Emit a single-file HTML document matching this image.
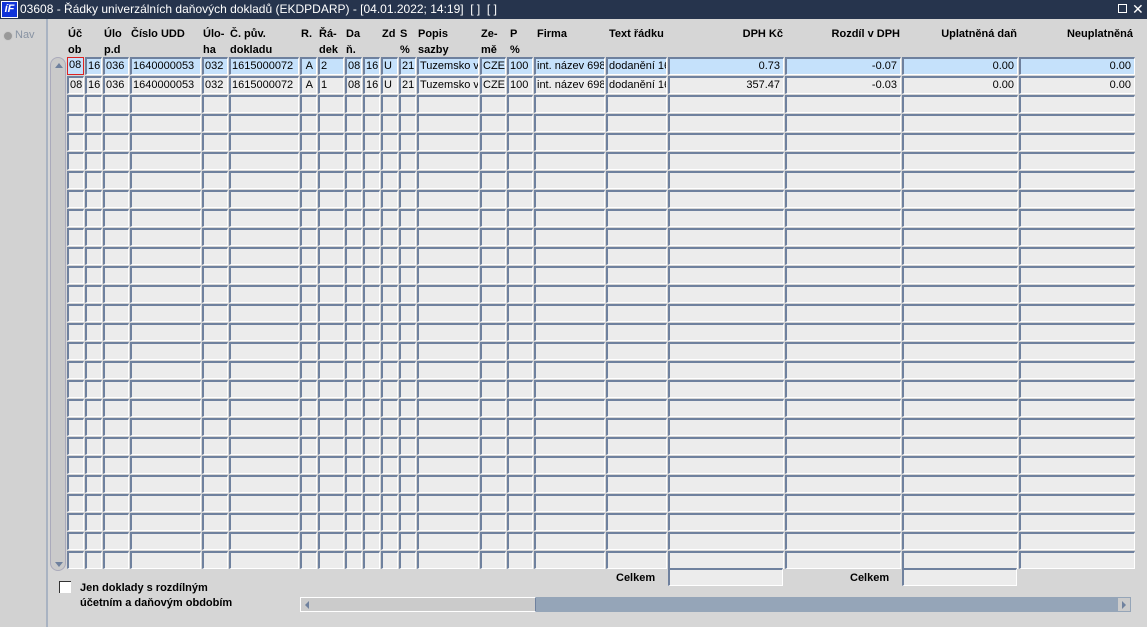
<!DOCTYPE html>
<html><head><meta charset="utf-8">
<style>
*{box-sizing:border-box;margin:0;padding:0}
body{width:1147px;height:627px;overflow:hidden;background:#d6d6d6;font-family:"Liberation Sans",Arial,sans-serif;font-size:11px;position:relative}
#title{position:absolute;left:0;top:0;width:1147px;height:19px;background:#26344d;color:#fff;font-size:12px;line-height:19px}
#title .ic{position:absolute;left:1px;top:1px;width:17px;height:17px;background:#1034d8;border:1px solid #fff;color:#fff;font-weight:bold;font-style:italic;font-size:11px;line-height:15px;text-align:center}
#title .t{position:absolute;left:20px;top:0}
#left{position:absolute;left:0;top:19px;width:48px;height:608px;background:#d2d2d2;border-right:2px solid #a9b3c2}
.h{position:absolute;font-weight:bold;line-height:16px;color:#000}
.c{position:absolute;height:18px;background:#ececec;border-top:2px solid #6f819e;border-left:2px solid #6f819e;border-bottom:1px solid #fff;border-right:1px solid #fff;line-height:15px;padding-left:1px;white-space:nowrap;overflow:hidden;color:#000}
.b{background:#c5e1fb}
.r{text-align:right;padding-right:3px}
</style></head><body>
<div id="title"><div class="ic">íF</div><div class="t">03608 - Řádky univerzálních daňových dokladů (EKDPDARP) - [04.01.2022; 14:19]&nbsp; [ ]&nbsp; [ ]</div>
<div style="position:absolute;left:1118px;top:4px;width:9px;height:9px;border:1px solid #fff"></div>
<div style="position:absolute;left:1132px;top:0;font-size:14px">✕</div></div>
<div id="left"><div style="position:absolute;left:3px;top:12px;width:10px;height:10px;border-radius:50%;background:#999;border:1px solid #ccc"></div><div style="position:absolute;left:15px;top:10px;color:#8893a3;font-size:11px">Nav</div></div>

<div class="h" style="left:68px;top:26px">Úč<br>ob</div>
<div class="h" style="left:104px;top:26px">Úlo<br>p.d</div>
<div class="h" style="left:131px;top:26px">Číslo UDD</div>
<div class="h" style="left:203px;top:26px">Úlo-<br>ha</div>
<div class="h" style="left:230px;top:26px">Č. pův.<br>dokladu</div>
<div class="h" style="left:301px;top:26px">R.</div>
<div class="h" style="left:319px;top:26px">Řá-<br>dek</div>
<div class="h" style="left:346px;top:26px">Da<br>ň.</div>
<div class="h" style="left:382px;top:26px">Zd</div>
<div class="h" style="left:400px;top:26px">S<br>%</div>
<div class="h" style="left:418px;top:26px">Popis<br>sazby</div>
<div class="h" style="left:481px;top:26px">Ze-<br>mě</div>
<div class="h" style="left:510px;top:26px">P<br>%</div>
<div class="h" style="left:537px;top:26px">Firma</div>
<div class="h" style="left:609px;top:26px">Text řádku</div>
<div class="h" style="left:668px;top:26px;width:115px;text-align:right">DPH Kč</div>
<div class="h" style="left:785px;top:26px;width:115px;text-align:right">Rozdíl v DPH</div>
<div class="h" style="left:902px;top:26px;width:115px;text-align:right">Uplatněná daň</div>
<div class="h" style="left:1019px;top:26px;width:114px;text-align:right;overflow:hidden;white-space:nowrap;direction:rtl">Neuplatněná</div>

<div style="position:absolute;left:50px;top:57px;width:16px;height:514px;background:#cacaca;border-radius:8px;border:1px solid #aab"></div>
<div style="position:absolute;left:55px;top:63px;width:0;height:0;border-left:4px solid transparent;border-right:4px solid transparent;border-bottom:5px solid #6f819e"></div>
<div style="position:absolute;left:55px;top:562px;width:0;height:0;border-left:4px solid transparent;border-right:4px solid transparent;border-top:5px solid #6f819e"></div>

<div id="grid"></div>

<div style="position:absolute;left:59px;top:581px;width:12px;height:12px;background:#fff;border-top:1px solid #333;border-left:1px solid #333"></div>
<div class="h" style="left:80px;top:581px;line-height:15px">Jen doklady s rozdílným<br>účetním a daňovým obdobím</div>
<div class="h" style="left:616px;top:570px">Celkem</div>
<div class="c" style="left:668px;top:568px;width:115px"></div>
<div class="h" style="left:850px;top:570px">Celkem</div>
<div class="c" style="left:902px;top:568px;width:115px"></div>
<div style="position:absolute;left:300px;top:597px;width:831px;height:15px;background:#95a5b8"></div>
<div style="position:absolute;left:300px;top:597px;width:236px;height:15px;background:#cbcbcb;border:1px solid #fff;border-right:1px solid #6f819e"></div>
<div style="position:absolute;left:305px;top:601px;border-top:4px solid transparent;border-bottom:4px solid transparent;border-right:4px solid #6f819e"></div>
<div style="position:absolute;left:1118px;top:598px;width:12px;height:13px;background:#cbcbcb"></div>
<div style="position:absolute;left:1122px;top:601px;border-top:4px solid transparent;border-bottom:4px solid transparent;border-left:4px solid #6f819e"></div>

<script>
var s=[67,85,103,130,202,229,300,318,345,363,381,399,417,480,507,534,606,668,785,902,1019,1136];
var d=[["08","16","036","1640000053","032","1615000072","A","2","08","16","U","21","Tuzemsko v","CZE","100","int. název 698","dodanění 16","0.73","-0.07","0.00","0.00"],
["08","16","036","1640000053","032","1615000072","A","1","08","16","U","21","Tuzemsko v","CZE","100","int. název 698","dodanění 16","357.47","-0.03","0.00","0.00"]];
var h="";
for(var r=0;r<27;r++){var y=57+r*19;for(var c=0;c<21;c++){var t=(d[r]||[])[c]||"";var cl="c"+(r==0?" b":"")+((c==6||c>=17)?" r":"");var st="left:"+s[c]+"px;top:"+y+"px;width:"+(s[c+1]-s[c]-1)+"px";if(r==0&&c==0)st+=";border:1px solid #d22";h+='<div class="'+cl+'" style="'+st+'">'+t+'</div>';}}
document.getElementById("grid").innerHTML=h;
</script>
</body></html>
